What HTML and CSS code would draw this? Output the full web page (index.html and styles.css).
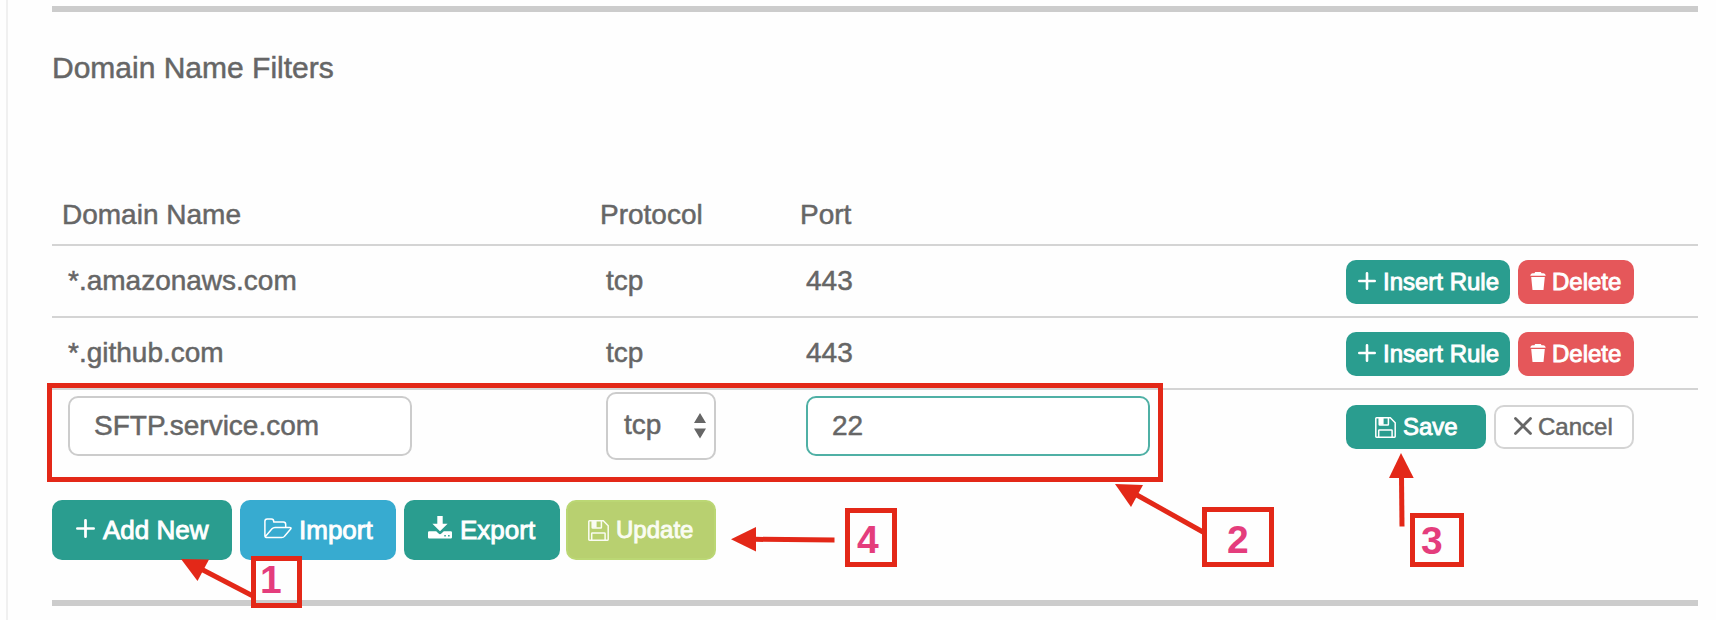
FILE: index.html
```html
<!DOCTYPE html>
<html lang="en">
<head>
<meta charset="utf-8">
<title>Domain Name Filters</title>
<link rel="stylesheet" href="styles.css">
</head>
<body>
<svg class="sprite" aria-hidden="true">
  <symbol id="plus" viewBox="0 0 18 18"><path d="M9 1.3v15.400M1.300 9h15.400" stroke="currentColor" stroke-width="2.600" stroke-linecap="round"/></symbol>
  <symbol id="trash" viewBox="0 0 16 18"><path d="M5.2 0h5.6l.8 1.3h1.8q1.6.3 2.2 1.7v.8H.4V3Q1 1.600 2.600 1.300h1.800zM1.200 5h13.600l-1.300 13H2.500z" fill="currentColor"/></symbol>
  <symbol id="disk" viewBox="0 0 21 21"><path d="M.8 1.500q0-.7.7-.7h13.800l4.900 5v13.700q0 .7-.7.700H1.500q-.7 0-.7-.7zM4.200.8v6.700q0 .6.600.600h8q.6 0 .6-.6V.8M3.700 20v-6.400q0-.7.700-.7h12q.7 0 .7.700V20" fill="none" stroke="currentColor" stroke-width="1.500"/><path d="M4.200 1h4.400v6.800H4.200z" fill="currentColor"/></symbol>
  <symbol id="folder" viewBox="0 0 28 21"><path d="M.9 18V3.200Q.9.900 3.200.9h4.200q2.300 0 2.300 2.300v.9h9.700q2.300 0 2.300 2.300v3.100M1.200 18.700 8 10.800q1.200-1.300 3-1.300h14.700q2 .2 1 1.600l-6 7q-1.200 1.500-3 1.500H3.200Q1 19.600.9 17.600" fill="none" stroke="currentColor" stroke-width="1.500" stroke-linejoin="round"/></symbol>
  <symbol id="download" viewBox="0 0 24 23"><path d="M9.300 0h5.400v7.700h4.900L12 15.300 4.400 7.700h4.900z" fill="currentColor"/><path fill-rule="evenodd" d="M1.200 15.300h7l2.400 2.300q1.400 1.100 2.800 0l2.400-2.300h7Q24 15.300 24 16.500v4.800q0 1.200-1.200 1.200H1.200Q0 22.500 0 21.300v-4.800q0-1.200 1.200-1.200zM16.300 19v1.500h1.500V19zm3.800 0v1.500h1.500V19z" fill="currentColor"/></symbol>
  <symbol id="cross" viewBox="0 0 18 18"><path d="m1.500 1.500 15 15m0-15-15 15" stroke="currentColor" stroke-width="2.800" stroke-linecap="round"/></symbol>
</svg>

<main class="panel">
  <h1 class="title">Domain Name Filters</h1>

  <div class="table">
    <div class="row head">
      <span>Domain Name</span><span>Protocol</span><span>Port</span><span></span>
    </div>
    <div class="row">
      <span>*.amazonaws.com</span><span>tcp</span><span>443</span>
      <div class="actions">
        <button class="btn small green insert"><svg class="i-plus"><use href="#plus"/></svg>Insert Rule</button>
        <button class="btn small red"><svg class="i-trash"><use href="#trash"/></svg>Delete</button>
      </div>
    </div>
    <div class="row">
      <span>*.github.com</span><span>tcp</span><span>443</span>
      <div class="actions">
        <button class="btn small green insert"><svg class="i-plus"><use href="#plus"/></svg>Insert Rule</button>
        <button class="btn small red"><svg class="i-trash"><use href="#trash"/></svg>Delete</button>
      </div>
    </div>
    <div class="row edit">
      <input class="field" value="SFTP.service.com" aria-label="Domain Name">
      <div class="select">tcp<svg class="caret" viewBox="0 0 12 26"><path d="M6 0l6 10H0zM6 25.500 12 15.500H0z" fill="#666"/></svg></div>
      <input class="field active" value="22" aria-label="Port">
      <div class="actions">
        <button class="btn small green save"><svg class="i-disk"><use href="#disk"/></svg>Save</button>
        <button class="btn small plain"><svg class="i-cross"><use href="#cross"/></svg>Cancel</button>
      </div>
    </div>
  </div>

  <div class="toolbar">
    <button class="btn green add"><svg class="i-plus-lg"><use href="#plus"/></svg>Add New</button>
    <button class="btn blue"><svg class="i-folder"><use href="#folder"/></svg>Import</button>
    <button class="btn green export"><svg class="i-download"><use href="#download"/></svg>Export</button>
    <button class="btn lime"><svg class="i-disk"><use href="#disk"/></svg>Update</button>
  </div>
</main>

<div class="mark highlight"></div>
<svg class="arrows" viewBox="0 0 1716 620">
  <g class="shafts">
    <path d="M202 569.500 252 595.500"/>
    <path d="M755 539.300 834.500 540"/>
    <path d="M1136 494.500 1203 532"/>
    <path d="M1401.500 476 1402 526.500"/>
  </g>
  <g class="heads">
    <path d="M181 559 209 559.500 197.500 581z"/>
    <path d="M731 539.200 756 527V551.500z"/>
    <path d="M1115 484 1143 485 1131 507z"/>
    <path d="M1401 453 1413.700 478H1389z"/>
  </g>
</svg>
<div class="mark step one">1</div>
<div class="mark step two">2</div>
<div class="mark step three">3</div>
<div class="mark step four">4</div>
</body>
</html>
```
FILE: styles.css
```css
* { box-sizing: border-box; }

body {
  margin: 0;
  height: 620px;
  overflow: hidden;
  position: relative;
  background: #fefefe;
  color: #666;
  font: 28px "Liberation Sans", Arial, sans-serif;
  -webkit-text-stroke: 0.5px currentColor;
}

.sprite { display: none; }

.panel {
  height: 620px;
  margin-left: 6px;
  padding: 6px 18px 0 44px;
  border-left: 2px solid #f0f0f0;
}

.title {
  height: 182px;
  margin: 0;
  padding-top: 39px;
  border-top: 6px solid #ccc;
  font-size: 30px;
  font-weight: 400;
  line-height: 34px;
}

.row {
  display: grid;
  grid-template-columns: 538px 200px 540px 1fr;
  align-items: center;
  height: 72px;
  padding-left: 16px;
  border-top: 2px solid #d4d4d4;
}

.row.head {
  height: 56px;
  padding: 0 0 2px 10px;
  border-top: 0;
}

.row.edit { height: 74px; }

.actions {
  display: flex;
  gap: 8px;
  padding-top: 2px;
}

.field {
  width: 344px;
  height: 60px;
  padding: 0 24px;
  border: 2px solid #ccc;
  border-radius: 10px;
  outline: 0;
  background: #fff;
  color: inherit;
  font: inherit;
  -webkit-text-stroke: inherit;
}

.field.active { border-color: #4fb0a5; }

.select {
  display: flex;
  align-items: center;
  justify-content: space-between;
  width: 110px;
  height: 68px;
  padding: 0 8px 2px 16px;
  border: 2px solid #ccc;
  border-radius: 10px;
  background: #fff;
}

.caret { width: 12px; height: 26px; margin-top: 2px; }

.btn {
  display: flex;
  align-items: center;
  gap: 7px;
  height: 60px;
  padding: 0;
  border: 0;
  border-radius: 10px;
  color: #fff;
  font: 26px "Liberation Sans", Arial, sans-serif;
  -webkit-text-stroke: 0.9px currentColor;
  white-space: nowrap;
}

.btn.small { height: 44px; font-size: 24px; }

.green { background: #2a9d8f; }
.insert { width: 164px; padding-left: 12px; }
.red { width: 116px; padding-left: 12px; gap: 6px; background: #e5575a; }
.save { width: 140px; padding-left: 29px; }
.plain {
  width: 140px;
  padding-left: 18px;
  gap: 6px;
  border: 2px solid #d4d4d4;
  background: #fff;
  color: #666;
  -webkit-text-stroke-width: 0.5px;
}

.toolbar { display: flex; gap: 8px; height: 106px; margin-top: 38px; border-bottom: 6px solid #ccc; }
.add { width: 180px; padding-left: 24px; gap: 8px; }
.blue { width: 156px; padding-left: 24px; background: #37abd0; }
.export { width: 156px; padding-left: 24px; gap: 8px; }
.lime { width: 150px; margin-left: -2px; padding-left: 20px; border: 2px solid #bbd774; background: #b8d070; color: #fafcf2; font-size: 24px; }

.i-plus, .i-cross { width: 18px; height: 18px; margin-top: -2px; }
.i-plus-lg { width: 19px; height: 19px; margin-top: -3px; }
.i-trash { width: 16px; height: 18px; margin-top: -2px; }
.i-disk { width: 21px; height: 21px; }
.i-folder { width: 28px; height: 21px; margin-top: -4px; }
.i-download { width: 24px; height: 23px; margin-top: -6px; }

/* Walkthrough annotations laid over the form */
.mark { position: absolute; border: 5px solid #e32818; }
.highlight { left: 47px; top: 383px; width: 1116px; height: 99px; }

.arrows { position: absolute; left: 0; top: 0; width: 1716px; height: 620px; pointer-events: none; }
.shafts { stroke: #e32818; stroke-width: 5; }
.heads { fill: #e32818; }

.step { color: #e43d7c; font-size: 39px; font-weight: 700; line-height: 44px; -webkit-text-stroke: 0; }
.one { left: 251px; top: 556px; width: 51px; height: 52px; padding-left: 4px; line-height: 37px; }
.two { left: 1202px; top: 507px; width: 72px; height: 60px; padding: 6px 0 0 20px; }
.three { left: 1410px; top: 513px; width: 54px; height: 54px; padding-left: 6px; line-height: 45px; }
.four { left: 845px; top: 508px; width: 52px; height: 59px; padding: 5px 0 0 7px; }
```
